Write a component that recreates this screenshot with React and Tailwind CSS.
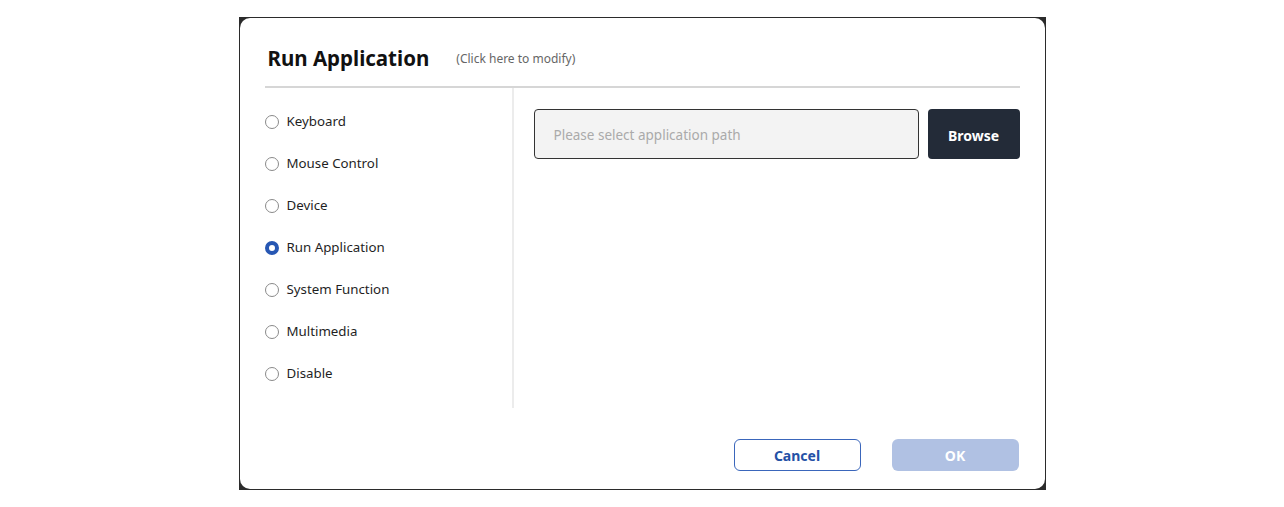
import React, { useState } from 'react';

const OPTIONS = [
    'Keyboard',
    'Mouse Control',
    'Device',
    'Run Application',
    'System Function',
    'Multimedia',
    'Disable',
];

const Radio = ({ checked }) => {
    if (checked) {
        return <span className="w-[14px] h-[14px] rounded-full border-[4px] border-[#2757b3] bg-white shrink-0" />;
    }
    return <span className="w-[14px] h-[14px] rounded-full border border-[#8a8a8a] bg-white shrink-0" />;
};

const App = () => {
    const [selected, setSelected] = useState('Run Application');

    return (
        <div className="w-full h-[507px] bg-white flex justify-center pt-[17px]" style={{ fontFamily: '"Noto Sans", "Open Sans", sans-serif' }}>
            {/* window frame */}
            <div className="w-[807px] h-[473px] bg-[#2b2b2b] p-px">
                <div className="w-full h-full bg-white rounded-[10px] flex flex-col px-[25px]">
                    <div className="h-[70px] flex items-end pb-[18px] pl-[3px] border-b-2 border-[#d6d6d6]">
                        <span className="text-[20.5px] font-bold text-[#111] leading-none">Run Application</span>
                        <span className="ml-[27px] text-[12px] text-[#666] leading-none mb-[3px]">(Click here to modify)</span>
                    </div>

                    <div className="flex h-[320px]">
                        <div className="w-[249px] border-r-2 border-[#ececec] flex flex-col pt-[24px] gap-[22px]">
                            {OPTIONS.map((name) => (
                                <button
                                    key={name}
                                    onClick={() => setSelected(name)}
                                    className="flex items-center gap-[8px] h-[20px] text-left"
                                >
                                    <Radio checked={selected === name} />
                                    <span className="text-[13.3px] text-[#1f1f1f]">{name}</span>
                                </button>
                            ))}
                        </div>

                        <div className="flex-1 pl-[20px] pt-[21px]">
                            <div className="flex gap-[9px]">
                                <div className="flex-1 h-[50px] bg-[#f3f3f3] border border-[#333] rounded-[4px] flex items-center px-[19px] pt-[2px]">
                                    <span className="text-[13.5px] text-[#aaa]">Please select application path</span>
                                </div>
                                <button className="w-[92px] h-[50px] pt-[2px] bg-[#232b38] rounded-[4px] text-white text-[14px] font-bold">
                                    Browse
                                </button>
                            </div>
                        </div>
                    </div>

                    <div className="flex justify-end gap-[31px] pt-[31px] pr-px">
                        <button className="w-[127px] h-[32px] rounded-[6px] border border-[#3a66bb] text-[#2451a6] text-[14px] font-bold">
                            Cancel
                        </button>
                        <button className="w-[127px] h-[32px] rounded-[6px] bg-[#b0c1e3] text-white text-[14px] font-bold">
                            OK
                        </button>
                    </div>
                </div>
            </div>
        </div>
    );
};

export default App;
